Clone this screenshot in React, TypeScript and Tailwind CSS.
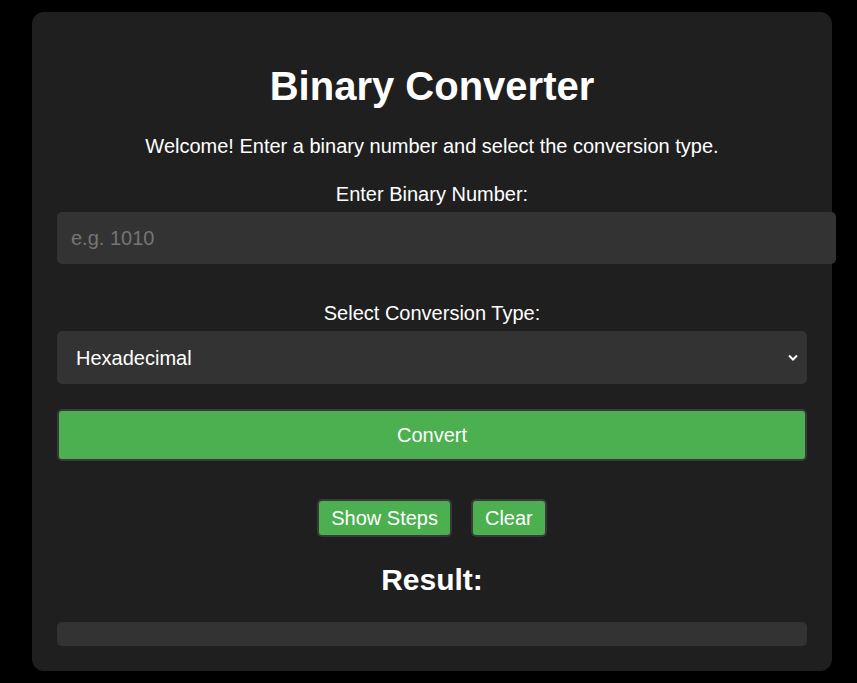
import { useState } from 'react'

export default function App() {
    const [value, setValue] = useState('')
    const [type, setType] = useState('hex')

    return (
        <div className="min-h-screen bg-black pt-[12px] pl-[32px] font-['Liberation_Sans',Arial,sans-serif] text-white">
            <div className="w-[800px] rounded-[12px] bg-[#1f1f1f] px-[25px] pt-[51px] pb-[25px]">
                <h1 className="text-center text-[40px] leading-[46px] font-bold">Binary Converter</h1>

                <p className="mt-[26px] text-center text-[20px] leading-[23px]">
                    Welcome! Enter a binary number and select the conversion type.
                </p>

                <label className="mt-[25px] block text-center text-[20px] leading-[23px]">Enter Binary Number:</label>
                <input
                    value={value}
                    onChange={(e) => setValue(e.target.value)}
                    placeholder="e.g. 1010"
                    className="mt-[6px] block h-[52px] w-[779px] rounded-[5px] bg-[#333333] px-[14px] text-[20px] text-white outline-none placeholder:text-[#757575]"
                />

                <label className="mt-[38px] block text-center text-[20px] leading-[23px]">Select Conversion Type:</label>
                <div className="relative mt-[6px]">
                    <select
                        value={type}
                        onChange={(e) => setType(e.target.value)}
                        className="block h-[53px] w-full appearance-none rounded-[5px] bg-[#333333] pl-[19px] text-[20px] text-white outline-none"
                    >
                        <option value="hex">Hexadecimal</option>
                        <option value="dec">Decimal</option>
                        <option value="oct">Octal</option>
                    </select>
                    <svg
                        className="pointer-events-none absolute right-[9px] top-[23px]"
                        width="10"
                        height="7"
                        viewBox="0 0 10 7"
                        fill="none"
                        stroke="white"
                        strokeWidth="2"
                    >
                        <path d="M1 1.5 L5 5.5 L9 1.5" />
                    </svg>
                </div>

                <button className="mt-[25px] block h-[52px] w-full rounded-[5px] border-2 border-[#3a3a3a] bg-[#4caf50] text-[20px] text-white">
                    Convert
                </button>

                <div className="mt-[38px] flex justify-center gap-[19px]">
                    <button className="h-[38px] rounded-[5px] border-2 border-[#3a3a3a] bg-[#4caf50] px-[12px] text-[20px] text-white">
                        Show Steps
                    </button>
                    <button className="h-[38px] rounded-[5px] border-2 border-[#3a3a3a] bg-[#4caf50] px-[12px] text-[20px] text-white">
                        Clear
                    </button>
                </div>

                <h2 className="mt-[26px] text-center text-[30px] leading-[34px] font-bold">Result:</h2>

                <div className="mt-[25px] h-[24px] rounded-[5px] bg-[#333333]"></div>
            </div>
        </div>
    )
}
